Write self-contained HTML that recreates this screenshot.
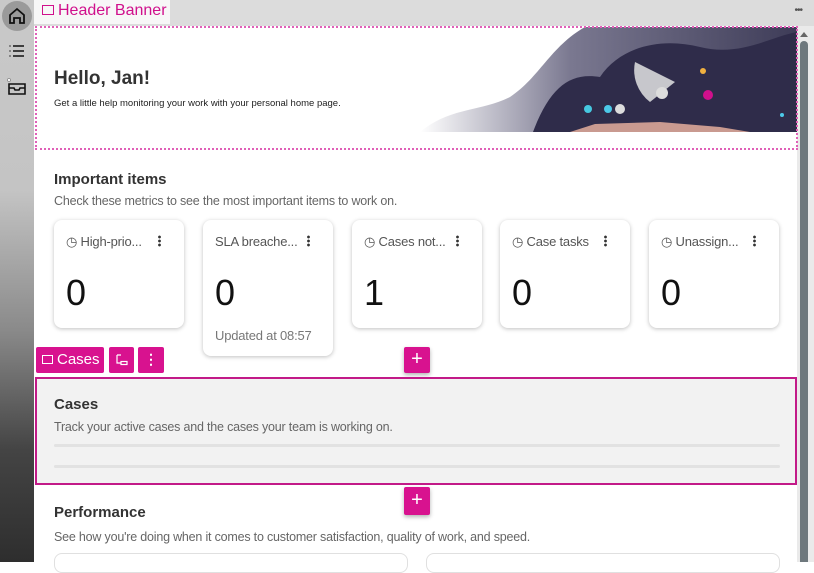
<!DOCTYPE html>
<html><head><meta charset="utf-8"><style>
*{box-sizing:border-box;margin:0;padding:0}
body{width:814px;height:562px;overflow:hidden;background:#fff;font-family:"Liberation Sans",sans-serif;position:relative;color:#333}
.abs{position:absolute}
#side{left:0;top:0;width:34px;height:562px;background:linear-gradient(#c9c9c9 0,#c4c4c4 190px,#8a8a8a 330px,#444 450px,#2e2e2e 562px)}
#top{left:34px;top:0;width:780px;height:26px;background:#dcdcdc}
#tab{left:34px;top:0;width:136px;height:24px;background:#f7f7f7;color:#d0108c;font-size:16px;padding:2px 0 0 8px}
.card{position:absolute;background:#fff;border-radius:8px;box-shadow:0 1px 4px rgba(0,0,0,.25);width:130px}
.ct{position:absolute;left:12px;top:14px;font-size:13px;color:#555;white-space:nowrap;letter-spacing:-.2px}
.dots{position:absolute;left:104px;top:15px;width:3px;height:12px;background:radial-gradient(circle,#333 1.2px,transparent 1.6px) 0 0/3px 4px}
.num{position:absolute;left:12px;top:52px;font-size:36px;color:#111}
.mag{position:absolute;background:#d8128f;color:#fff;border-radius:2px}
h2{font-size:15px;color:#333;font-weight:bold}
.sub{font-size:12.5px;color:#666;letter-spacing:-.2px}
</style></head><body>
<div id="side" class="abs">
 <div class="abs" style="left:2px;top:1px;width:30px;height:30px;border-radius:50%;background:#9a9a9a"></div>
 <svg class="abs" style="left:7px;top:6px" width="20" height="20" viewBox="0 0 20 20" fill="none" stroke="#111" stroke-width="1.8"><path d="M3 9L10 3l7 6v8h-4v-5H7v5H3z"/></svg>
 <svg class="abs" style="left:8px;top:43px" width="18" height="16" viewBox="0 0 18 16" stroke="#111" stroke-width="1.6"><path d="M5 3h11M5 8h11M5 13h11M1.5 3h1M1.5 8h1M1.5 13h1"/></svg>
 <svg class="abs" style="left:7px;top:78px" width="20" height="18" viewBox="0 0 20 18" fill="none" stroke="#111" stroke-width="1.6"><path d="M2 6h16v10H2zM2 10h5l1 2h4l1-2h5"/><circle cx="2" cy="2" r="1.5" fill="#fff" stroke="#888" stroke-width=".8"/></svg>
</div>
<div id="top" class="abs"><div class="abs" style="right:12px;top:5px;font-size:10px;color:#555;letter-spacing:-1px">•••</div></div>
<div id="tab" class="abs"><span style="display:inline-block;width:12px;height:10px;border:1.5px solid #d0108c;margin-right:4px"></span>Header Banner</div>
<div class="abs" style="left:797px;top:26px;width:17px;height:536px;background:#eaeaea"></div>
<div class="abs" style="left:800px;top:32px;width:0;height:0;border-left:4px solid transparent;border-right:4px solid transparent;border-bottom:5px solid #666"></div>
<div class="abs" style="left:800px;top:41px;width:8px;height:521px;background:#6e787d;border-radius:4px 4px 0 0"></div>
<svg class="abs" style="left:420px;top:27px" width="377" height="105" viewBox="0 0 377 105">
<defs><linearGradient id="g" x1="0" x2="1"><stop offset="0" stop-color="#fff"/><stop offset=".4" stop-color="#7a7890"/><stop offset="1" stop-color="#3e3c58"/></linearGradient></defs>
<path d="M0 105C30 80 60 85 90 70C120 50 130 20 165 0H377V105Z" fill="url(#g)"/>
<path d="M113 105C130 60 150 45 180 50C200 20 240 10 280 20C320 30 350 10 377 5V105Z" fill="#2f2c4a"/>
<path d="M150 105L175 97L240 95L300 100L330 105Z" fill="#c99a90"/>
<path d="M215 35A40 40 0 0 0 230 75L255 55Z" fill="#c7c7cc"/>
<circle cx="168" cy="82" r="4" fill="#46c8e0"/><circle cx="288" cy="68" r="5" fill="#d0108c"/>
<circle cx="200" cy="82" r="5" fill="#ddd"/><circle cx="242" cy="66" r="6" fill="#ddd"/>
<circle cx="188" cy="82" r="4" fill="#4cc9e8"/><circle cx="283" cy="44" r="3" fill="#f0b040"/><circle cx="362" cy="88" r="2" fill="#4cc9e8"/>
</svg>
<div class="abs" style="left:35px;top:26px;width:763px;height:124px;border:2px dotted #e060b8"></div>
<div class="abs" style="left:54px;top:68px;font-size:19px;font-weight:bold;color:#333">Hello, Jan!</div>
<div class="abs" style="left:54px;top:98px;font-size:9.5px;color:#222">Get a little help monitoring your work with your personal home page.</div>
<div class="abs" style="left:54px;top:171px"><h2>Important items</h2></div>
<div class="abs sub" style="left:54px;top:194px">Check these metrics to see the most important items to work on.</div>
<div class="card" style="left:54px;top:220px;height:108px"><div class="ct">◷ High-prio...</div><div class="dots"></div><div class="num">0</div></div>
<div class="card" style="left:203px;top:220px;height:136px"><div class="ct">SLA breache...</div><div class="dots"></div><div class="num">0</div><div class="ct" style="top:108px;color:#777">Updated at 08:57</div></div>
<div class="card" style="left:352px;top:220px;height:108px"><div class="ct">◷ Cases not...</div><div class="dots"></div><div class="num">1</div></div>
<div class="card" style="left:500px;top:220px;height:108px"><div class="ct">◷ Case tasks</div><div class="dots"></div><div class="num">0</div></div>
<div class="card" style="left:649px;top:220px;height:108px"><div class="ct">◷ Unassign...</div><div class="dots"></div><div class="num">0</div></div>
<div class="mag" style="left:36px;top:347px;width:68px;height:26px;font-size:15px;padding:4px 0 0 6px"><span style="display:inline-block;width:11px;height:9px;border:1.3px solid #fff;margin-right:4px"></span>Cases</div>
<div class="mag" style="left:109px;top:347px;width:25px;height:26px"><svg width="25" height="26" viewBox="0 0 25 26" fill="none" stroke="#fff" stroke-width="1.2"><path d="M8 8h4M8 8v8h4"/><rect x="12" y="14.5" width="6" height="3"/></svg></div>
<div class="mag" style="left:138px;top:347px;width:26px;height:26px;font-size:14px;text-align:center;line-height:25px;font-weight:bold">⋮</div>
<div class="mag" style="left:404px;top:347px;width:26px;height:26px;font-size:20px;text-align:center;line-height:25px;box-shadow:0 2px 4px rgba(0,0,0,.3)">+</div>
<div class="abs" style="left:35px;top:377px;width:762px;height:108px;background:#f2f2f2;border:2px solid #c21a88"></div>
<div class="abs" style="left:54px;top:396px"><h2>Cases</h2></div>
<div class="abs sub" style="left:54px;top:420px">Track your active cases and the cases your team is working on.</div>
<div class="abs" style="left:54px;top:444px;width:726px;height:3px;background:#e2e2e2;border-radius:2px"></div>
<div class="abs" style="left:54px;top:465px;width:726px;height:3px;background:#e2e2e2;border-radius:2px"></div>
<div class="mag" style="left:404px;top:487px;width:26px;height:28px;font-size:20px;text-align:center;line-height:26px;box-shadow:0 2px 4px rgba(0,0,0,.3)">+</div>
<div class="abs" style="left:54px;top:504px"><h2>Performance</h2></div>
<div class="abs sub" style="left:54px;top:530px">See how you're doing when it comes to customer satisfaction, quality of work, and speed.</div>
<div class="abs" style="left:54px;top:553px;width:354px;height:20px;border:1px solid #e0e0e0;border-radius:8px"></div>
<div class="abs" style="left:426px;top:553px;width:354px;height:20px;border:1px solid #e0e0e0;border-radius:8px"></div>
</body></html>
